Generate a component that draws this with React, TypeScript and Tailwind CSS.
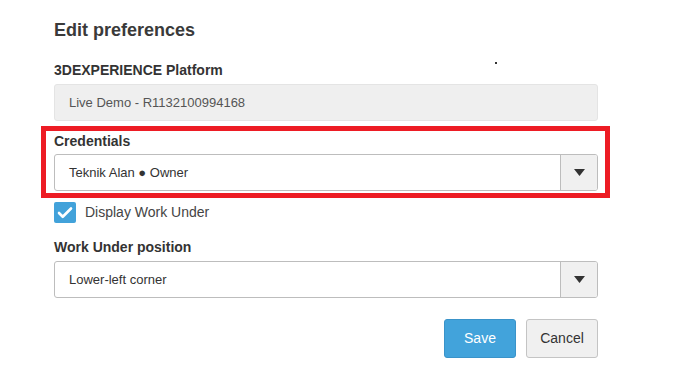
import { Check } from 'lucide-react';

function Caret() {
  return (
    <svg width="11" height="7" viewBox="0 0 11 7" className="block">
      <path d="M0 0 L11 0 L5.5 7 Z" fill="#333" />
    </svg>
  );
}

function SelectBox({ value }: { value: string }) {
  return (
    <div className="flex h-[37px] w-[544px] rounded-[3px] border border-[#bdbdbd] bg-white overflow-hidden">
      <div className="flex-1 flex items-center pl-[14px] text-[13px] text-[#333]">{value}</div>
      <div className="w-[37px] flex items-center justify-center border-l border-[#bdbdbd] bg-[#f0f0f0]">
        <Caret />
      </div>
    </div>
  );
}

export default function App() {
  return (
    <div className="relative w-[676px] h-[385px] bg-white font-['Liberation_Sans',Arial,sans-serif] text-[#333]">
      {/* stray pixel */}
      <span className="absolute left-[495px] top-[62px] w-[2px] h-[2px] bg-[#333]" />

      <div className="pl-[54px] pt-[19px]">
        <h1 className="text-[18px] font-bold leading-[22px] text-[#3a3a3a]">Edit preferences</h1>

        <div className="mt-[21px]">
          <p className="text-[14px] font-bold leading-[16px] text-[#333]">3DEXPERIENCE Platform</p>
          <div className="mt-[6px] h-[37px] w-[544px] rounded-[3px] border border-[#e4e4e4] bg-[#efefef] flex items-center pl-[14px] text-[13px] text-[#555]">
            Live Demo - R1132100994168
          </div>
        </div>

        {/* highlighted credentials */}
        <div className="-ml-[13px] mt-[5px] w-[569px] h-[72px] border-[5px] border-[#ed1c24] pl-[8px] pt-[2px]">
          <p className="text-[14px] font-bold leading-[16px] text-[#333]">Credentials</p>
          <div className="mt-[5px]">
            <SelectBox value="Teknik Alan ● Owner" />
          </div>
        </div>

        <label className="mt-[4px] flex items-center gap-[9px]">
          <span className="w-[22px] h-[21px] rounded-[2px] bg-[#42a2da] flex items-center justify-center">
            <Check className="w-[18px] h-[18px] text-white" strokeWidth={3.5} />
          </span>
          <span className="text-[14px] text-[#444]">Display Work Under</span>
        </label>

        <div className="mt-[16px]">
          <p className="text-[14px] font-bold leading-[16px] text-[#333]">Work Under position</p>
          <div className="mt-[6px]">
            <SelectBox value="Lower-left corner" />
          </div>
        </div>

        <div className="mt-[21px] w-[544px] flex justify-end gap-[10px]">
          <button className="w-[72px] h-[39px] rounded-[3px] border border-[#3a93c9] bg-[#42a3db] text-white text-[14px]">
            Save
          </button>
          <button className="w-[72px] h-[39px] rounded-[3px] border border-[#c4c4c4] bg-[#f0f0f0] text-[#333] text-[14px]">
            Cancel
          </button>
        </div>
      </div>
    </div>
  );
}
